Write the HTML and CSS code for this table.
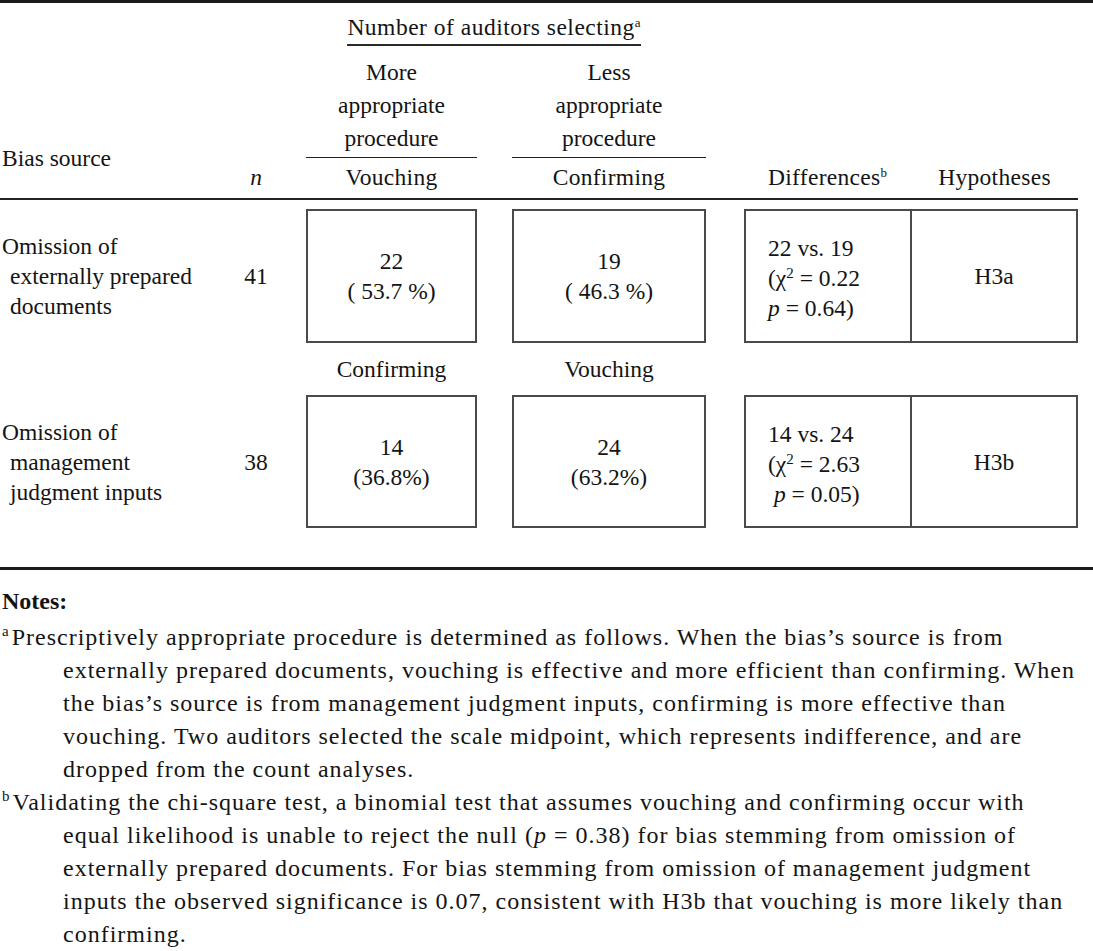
FILE: index.html
```html
<!DOCTYPE html>
<html lang="en">
<head>
<meta charset="utf-8">
<title>Table</title>
<link rel="stylesheet" href="styles.css">
</head>
<body>
<div class="page">
  <div class="tbl">
    <div class="hd">
      <div class="hd-group"><span class="hd-group-label">Number of auditors selecting<sup class="tsup">a</sup></span></div>
      <div class="hd-bias">Bias source</div>
      <div class="hd-sub hd-sub1">More<br>appropriate<br>procedure</div>
      <div class="hd-sub hd-sub2">Less<br>appropriate<br>procedure</div>
      <div class="hd-n"><i>n</i></div>
      <div class="hd-col hd-c1">Vouching</div>
      <div class="hd-col hd-c2">Confirming</div>
      <div class="hd-col hd-c3">Differences<sup class="tsup">b</sup></div>
      <div class="hd-col hd-c4">Hypotheses</div>
    </div>
    <div class="bd">
      <div class="bias r1">Omission of<br>externally prepared<br>documents</div>
      <div class="n r1">41</div>
      <div class="box box1 r1"><div>22<br>( 53.7 %)</div></div>
      <div class="box box2 r1"><div>19<br>( 46.3 %)</div></div>
      <div class="pair r1">
        <div class="diff"><div>22 vs. 19<br>(χ<sup class="csup">2</sup> = 0.22<br><i>p</i> = 0.64)</div></div>
        <div class="hyp"><div>H3a</div></div>
      </div>

      <div class="lbl lbl1">Confirming</div>
      <div class="lbl lbl2">Vouching</div>

      <div class="bias r2">Omission of<br>management<br>judgment inputs</div>
      <div class="n r2">38</div>
      <div class="box box1 r2"><div>14<br>(36.8%)</div></div>
      <div class="box box2 r2"><div>24<br>(63.2%)</div></div>
      <div class="pair r2">
        <div class="diff"><div>14 vs. 24<br>(χ<sup class="csup">2</sup> = 2.63<br>&nbsp;<i>p</i> = 0.05)</div></div>
        <div class="hyp"><div>H3b</div></div>
      </div>
    </div>
  </div>
  <div class="notes">
    <div class="notes-title">Notes:</div>
    <div class="note"><sup class="nsup">a</sup>Prescriptively appropriate procedure is determined as follows. When the bias’s source is from<br>externally prepared documents, vouching is effective and more efficient than confirming. When<br>the bias’s source is from management judgment inputs, confirming is more effective than<br>vouching. Two auditors selected the scale midpoint, which represents indifference, and are<br>dropped from the count analyses.</div>
    <div class="note"><sup class="nsup">b</sup>Validating the chi-square test, a binomial test that assumes vouching and confirming occur with<br>equal likelihood is unable to reject the null (<i>p</i> = 0.38) for bias stemming from omission of<br>externally prepared documents. For bias stemming from omission of management judgment<br>inputs the observed significance is 0.07, consistent with H3b that vouching is more likely than<br>confirming.</div>
  </div>
</div>
</body>
</html>
```

FILE: styles.css
```css
* { box-sizing: border-box; }

body {
  margin: 0;
  background: #ffffff;
  color: #141414;
  font-family: "Liberation Serif", "Times New Roman", serif;
}

.page {
  width: 1093px;
}

.tbl {
  border-top: 3px solid #1a1a1a;
  border-bottom: 3px solid #1a1a1a;
}

/* ---------- header ---------- */
.hd {
  width: 1078px;
  display: grid;
  grid-template-columns: 230px 52px 195px 229px 205px 167px;
  border-bottom: 2px solid #222;
  font-size: 23.5px;
}

.hd-group {
  grid-column: 3 / 5;
  grid-row: 1;
  text-align: center;
  padding-top: 9px;
  margin-bottom: 10px;
}

.hd-group-label {
  display: inline-block;
  line-height: 30px;
  padding-bottom: 2px;
  border-bottom: 2px solid #2a2a2a;
  letter-spacing: 0.5px;
}

.tsup {
  font-size: 13px;
  line-height: 0;
  vertical-align: 8px;
  letter-spacing: 0;
}

.hd-sub {
  grid-row: 2;
  line-height: 33px;
  text-align: center;
  padding-bottom: 2px;
  border-bottom: 1px solid #222;
}

.hd-sub1 { grid-column: 3; margin-left: 24px; }
.hd-sub2 { grid-column: 4; margin-left: 35px; }

.hd-bias {
  grid-column: 1;
  grid-row: 2 / 4;
  align-self: end;
  line-height: 30px;
  margin-bottom: 25px;
  padding-left: 2px;
}

.hd-n {
  grid-column: 2;
  grid-row: 3;
  line-height: 30px;
  padding: 4px 0 6px;
  text-align: center;
}

.hd-col {
  grid-row: 3;
  line-height: 30px;
  padding: 4px 0 6px;
  text-align: center;
  letter-spacing: 0.3px;
}

.hd-c1 { grid-column: 3; margin-left: 24px; }
.hd-c2 { grid-column: 4; margin-left: 35px; }
.hd-c3 { grid-column: 5; margin-left: 38px; }
.hd-c4 { grid-column: 6; }

/* ---------- body ---------- */
.bd {
  width: 1078px;
  display: grid;
  grid-template-columns: 230px 52px 195px 229px 205px 167px;
  grid-template-rows: 134px 52px 133px;
  padding: 9px 0 39px;
  font-size: 23.5px;
  line-height: 30px;
  align-items: center;
}

.r1 { grid-row: 1; }
.r2 { grid-row: 3; }

.bias {
  grid-column: 1;
  padding-left: 10px;
  text-indent: -8px;
}

.n {
  grid-column: 2;
  text-align: center;
}

.box {
  align-self: stretch;
  border: 2px solid #4a4a4a;
  display: flex;
  align-items: center;
  justify-content: center;
  text-align: center;
}

.box1 { grid-column: 3; margin-left: 24px; }
.box2 { grid-column: 4; margin-left: 35px; }

.pair {
  grid-column: 5 / 7;
  margin-left: 38px;
  align-self: stretch;
  display: flex;
  border: 2px solid #4a4a4a;
}

.diff {
  width: 166px;
  border-right: 2px solid #4a4a4a;
  display: flex;
  align-items: center;
  padding-left: 22px;
  padding-top: 4px;
  white-space: nowrap;
}

.hyp {
  flex: 1;
  display: flex;
  align-items: center;
  justify-content: center;
}

.csup {
  font-size: 15px;
  line-height: 0;
  vertical-align: 8px;
}

.lbl {
  grid-row: 2;
  text-align: center;
}

.lbl1 { grid-column: 3; margin-left: 24px; }
.lbl2 { grid-column: 4; margin-left: 35px; }

/* ---------- notes ---------- */
.notes {
  font-size: 24px;
  line-height: 33px;
  padding-top: 15px;
}

.notes-title {
  font-weight: bold;
  padding-left: 2px;
  margin-bottom: 3px;
}

.note {
  padding-left: 63px;
  text-indent: -61px;
  letter-spacing: 1px;
  white-space: nowrap;
}

.nsup {
  font-size: 15px;
  line-height: 0;
  vertical-align: 9px;
  letter-spacing: 0;
  margin-right: 3px;
}
```
